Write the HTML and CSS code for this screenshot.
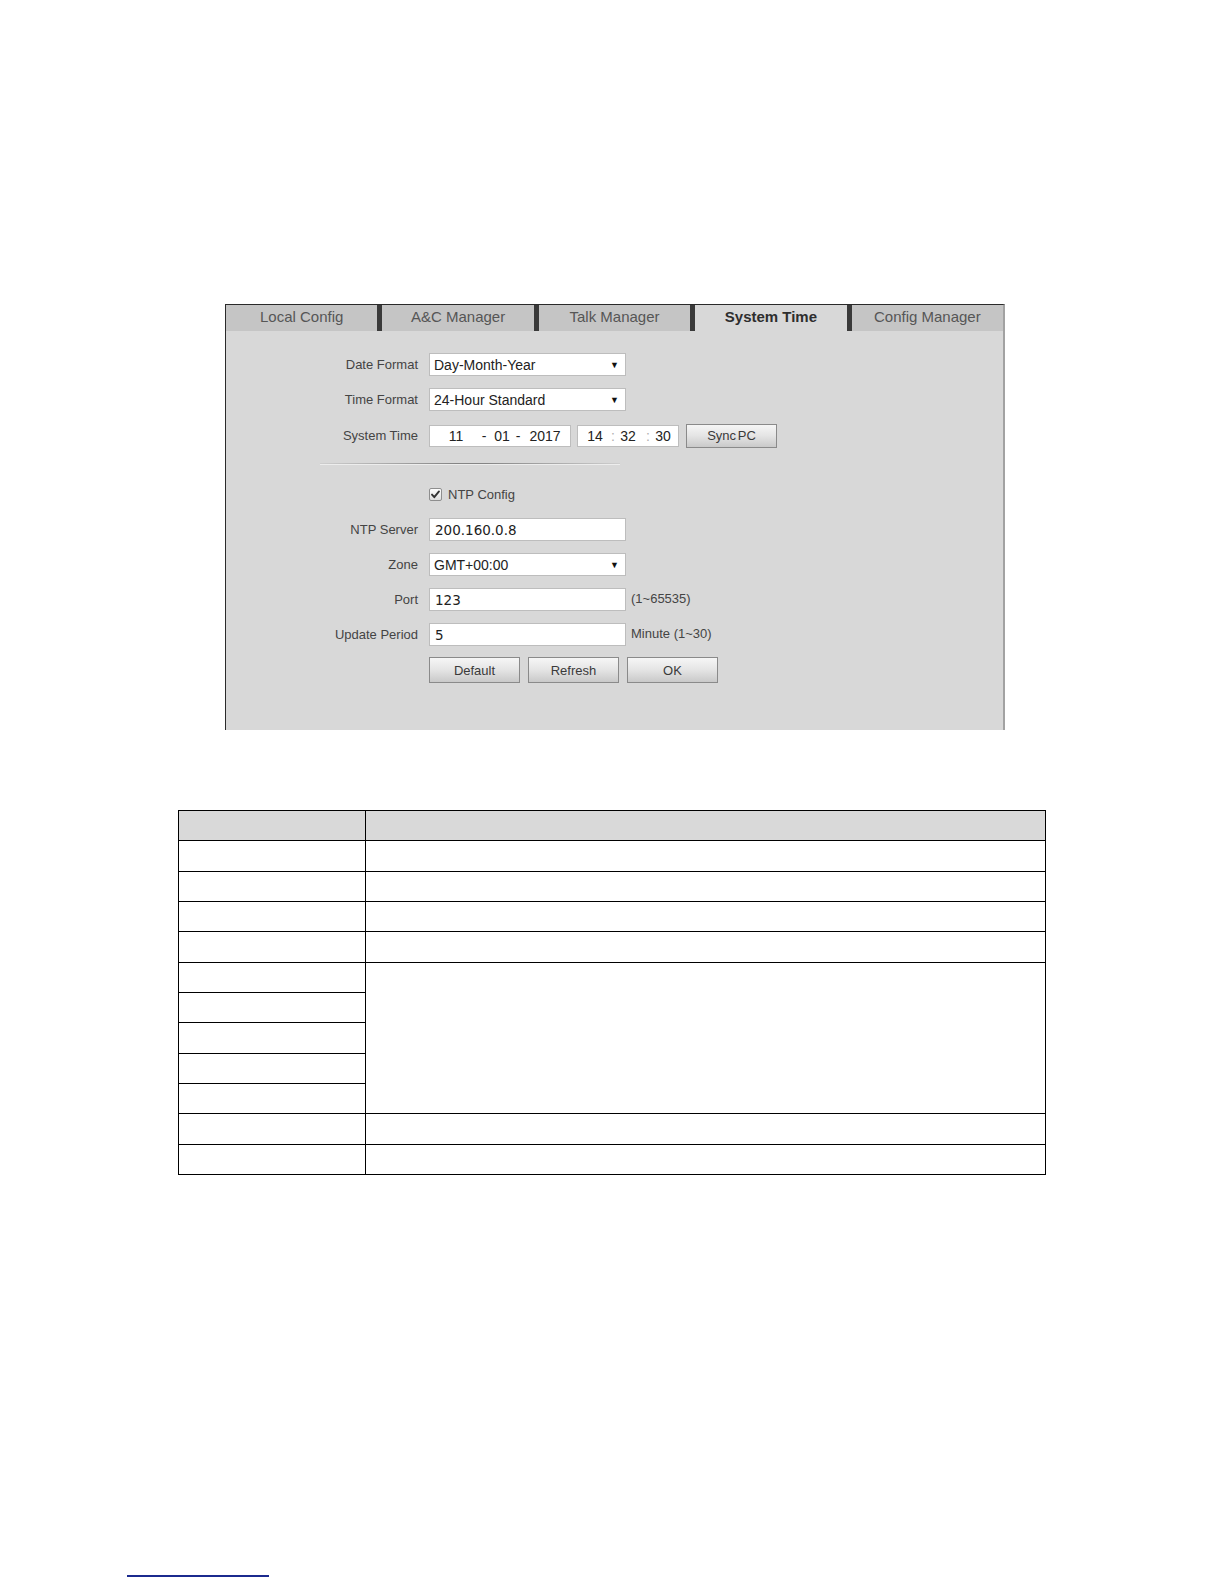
FILE: index.html
```html
<!DOCTYPE html>
<html lang="en">
<head>
<meta charset="utf-8">
<title>System Time</title>
<link rel="stylesheet" href="styles.css">
</head>
<body>
<div class="page">
  <div class="panel">
    <div class="tabs">
      <div class="tab">Local Config</div>
      <div class="tab-sep"></div>
      <div class="tab">A&amp;C Manager</div>
      <div class="tab-sep"></div>
      <div class="tab">Talk Manager</div>
      <div class="tab-sep"></div>
      <div class="tab tab-active">System Time</div>
      <div class="tab-sep"></div>
      <div class="tab">Config Manager</div>
    </div>
    <div class="form">
      <div class="row">
        <span class="lbl">Date Format</span>
        <div class="select"><span>Day-Month-Year</span><span class="arrow">&#9660;</span></div>
      </div>
      <div class="row">
        <span class="lbl">Time Format</span>
        <div class="select"><span>24-Hour Standard</span><span class="arrow">&#9660;</span></div>
      </div>
      <div class="row row-time">
        <span class="lbl">System Time</span>
        <div class="datebox">
          <span class="seg d-day">11</span><span class="sepch d-s1">-</span><span class="seg d-mon">01</span><span class="sepch d-s2">-</span><span class="seg d-year">2017</span>
        </div>
        <div class="timebox">
          <span class="seg t-f">14</span><span class="sepch colon t-c1">:</span><span class="seg t-f">32</span><span class="sepch colon t-c2">:</span><span class="seg t-f">30</span>
        </div>
        <div class="btn btn-sync">Sync PC</div>
      </div>
      <div class="divider"></div>
      <div class="row row-check">
        <span class="lbl"></span>
        <span class="checkbox">
          <svg width="13" height="13" viewBox="0 0 13 13">
            <defs>
              <linearGradient id="cbg" x1="0" y1="0" x2="0" y2="1">
                <stop offset="0" stop-color="#ffffff"/>
                <stop offset="1" stop-color="#dcdcdc"/>
              </linearGradient>
            </defs>
            <rect x="0.5" y="0.5" width="12" height="12" rx="1.5" fill="url(#cbg)" stroke="#8e8e8e"/>
            <path d="M3 6.6 L5.3 9.2 L10 3.4" fill="none" stroke="#333" stroke-width="1.9" stroke-linecap="round" stroke-linejoin="round"/>
          </svg>
        </span>
        <span class="check-text">NTP Config</span>
      </div>
      <div class="row">
        <span class="lbl">NTP Server</span>
        <div class="input">200.160.0.8</div>
      </div>
      <div class="row">
        <span class="lbl">Zone</span>
        <div class="select"><span>GMT+00:00</span><span class="arrow">&#9660;</span></div>
      </div>
      <div class="row">
        <span class="lbl">Port</span>
        <div class="input">123</div>
        <span class="hint">(1~65535)</span>
      </div>
      <div class="row">
        <span class="lbl">Update Period</span>
        <div class="input">5</div>
        <span class="hint">Minute (1~30)</span>
      </div>
      <div class="row row-buttons">
        <span class="lbl"></span>
        <div class="btn">Default</div>
        <div class="btn">Refresh</div>
        <div class="btn">OK</div>
      </div>
    </div>
  </div>

  <table class="params">
    <tr class="head"><td class="c1"></td><td></td></tr>
    <tr><td class="c1"></td><td></td></tr>
    <tr><td class="c1"></td><td></td></tr>
    <tr><td class="c1"></td><td></td></tr>
    <tr><td class="c1"></td><td></td></tr>
    <tr><td class="c1"></td><td rowspan="5"></td></tr>
    <tr><td class="c1"></td></tr>
    <tr><td class="c1"></td></tr>
    <tr><td class="c1"></td></tr>
    <tr><td class="c1"></td></tr>
    <tr><td class="c1"></td><td></td></tr>
    <tr><td class="c1"></td><td></td></tr>
  </table>

  <div class="footnote-rule"></div>
</div>
</body>
</html>
```

FILE: styles.css
```css
html, body {
  margin: 0;
  padding: 0;
  background: #ffffff;
}

body {
  font-family: "Liberation Sans", Arial, sans-serif;
  color: #333333;
}

.page {
  padding-top: 304px;
  padding-bottom: 8px;
}

/* ---------- configuration panel ---------- */
.panel {
  margin-left: 225px;
  width: 780px;
  box-sizing: border-box;
  background: #d8d8d8;
  border-top: 1px solid #2a2a2a;
  border-left: 1px solid #2a2a2a;
  border-right: 2px solid #a2a2a2;
}

.tabs {
  display: flex;
  height: 26px;
}

.tab {
  flex: 1;
  background: #c5c5c5;
  color: #565656;
  font-size: 15px;
  line-height: 23px;
  padding-bottom: 3px;
  text-align: center;
  white-space: nowrap;
}

.tab-active {
  background: #d8d8d8;
  color: #2e2e2e;
  font-weight: bold;
}

.tab-sep {
  width: 5px;
  background: #3a3a3a;
}

.form {
  padding: 22px 0 47px 0;
}

.row {
  display: flex;
  align-items: center;
  height: 23px;
  margin-bottom: 12px;
}

.lbl {
  width: 192px;
  flex: none;
  margin-right: 11px;
  text-align: right;
  font-size: 13px;
  color: #444444;
}

.select,
.input {
  width: 197px;
  height: 23px;
  box-sizing: border-box;
  background: #ffffff;
  border: 1px solid #bdbdbd;
  display: flex;
  align-items: center;
}

.select {
  justify-content: space-between;
  padding: 0 6px 0 4px;
  font-size: 14px;
  color: #222222;
}

.select .arrow {
  font-size: 9px;
  color: #111111;
}

.input {
  padding-left: 5px;
  font-family: "DejaVu Sans", Verdana, sans-serif;
  font-size: 13.5px;
  color: #222222;
}

.hint {
  margin-left: 5px;
  margin-bottom: 2px;
  font-size: 13px;
  color: #444444;
}

/* system time row */
.row-time {
  height: 25px;
  margin-bottom: 0;
}

.datebox,
.timebox {
  height: 22px;
  box-sizing: border-box;
  background: #ffffff;
  border: 1px solid #bdbdbd;
  display: flex;
  align-items: center;
  font-size: 14px;
  color: #222222;
}

.datebox {
  width: 142px;
  padding-left: 13px;
}

.timebox {
  width: 102px;
  margin-left: 6px;
  padding-left: 7px;
}

.seg,
.sepch {
  display: inline-block;
  text-align: center;
}

.d-day { width: 26px; }
.d-s1 { width: 10px; margin-left: 10px; }
.d-mon { width: 20px; margin-left: 3px; }
.d-s2 { width: 10px; margin-left: 1px; }
.d-year { width: 36px; margin-left: 4px; }

.t-f { width: 20px; }
.t-c1 { width: 10px; margin-left: 3px; }
.t-c2 { width: 10px; margin-left: 5px; }

.colon {
  color: #b0b0b0;
}

.btn {
  width: 91px;
  height: 26px;
  box-sizing: border-box;
  border: 1px solid #8a8a8a;
  background: linear-gradient(to bottom, #f6f6f6 0%, #e4e4e4 50%, #c9c9c9 100%);
  font-size: 13px;
  color: #3a3a3a;
  display: flex;
  align-items: center;
  justify-content: center;
}

.btn-sync {
  height: 24px;
  margin-left: 7px;
  word-spacing: -2px;
}

.divider {
  margin: 15px 0 0 94px;
  width: 300px;
  height: 1px;
  background: linear-gradient(to right, rgba(150,150,150,0.15), #858585 45%, #858585 55%, rgba(150,150,150,0.15));
  box-shadow: 0 1px 0 rgba(255,255,255,0.55);
}

.row-check {
  height: 16px;
  margin-top: 22px;
  margin-bottom: 16px;
}

.checkbox {
  width: 13px;
  height: 13px;
  display: flex;
}

.check-text {
  margin-left: 6px;
  font-size: 13px;
  color: #444444;
}

.row-buttons {
  height: 26px;
  margin-top: -1px;
  margin-bottom: 0;
  gap: 8px;
}

.row-buttons .lbl {
  margin-right: 3px;
}

/* ---------- parameter table ---------- */
.params {
  margin: 80px 0 0 178px;
  width: 868px;
  border-collapse: collapse;
}

.params td {
  border: 1.5px solid #000000;
  padding: 0;
}

.params tr {
  height: 30.33px;
}

.params .c1 {
  width: 186px;
}

.params .head td {
  background: #d9d9d9;
}

/* ---------- footnote rule ---------- */
.footnote-rule {
  margin: 400px 0 0 127px;
  width: 142px;
  height: 2px;
  background: #1b2a8e;
}
```
